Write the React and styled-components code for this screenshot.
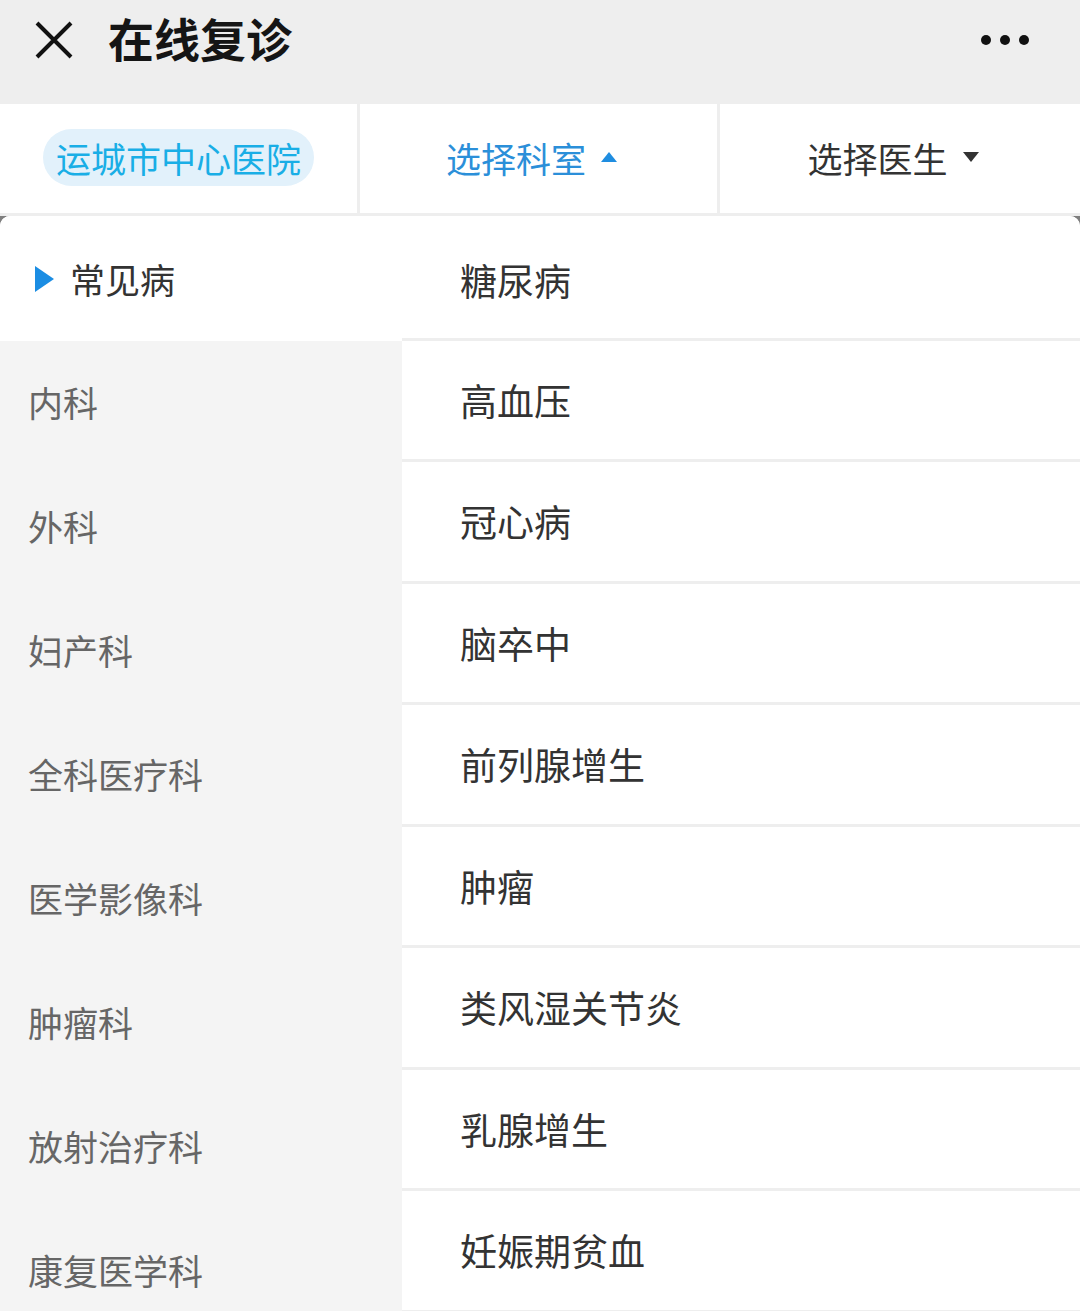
import React from "react";
import styled, { createGlobalStyle } from "styled-components";

const GlobalStyle = createGlobalStyle`
  html, body {
    margin: 0;
    padding: 0;
    background: #ffffff;
  }
  body {
    font-family: "Noto Sans CJK SC", "Noto Sans", sans-serif;
    -webkit-font-smoothing: antialiased;
  }
  * { box-sizing: border-box; }
`;

const Page = styled.div`
  width: 1080px;
  height: 1311px;
  overflow: hidden;
  display: flex;
  flex-direction: column;
  background: #7f7f7f;
`;

const TopBar = styled.header`
  height: 104px;
  flex: none;
  background: #eeeeee;
  display: flex;
  align-items: flex-start;
  padding: 0 0 0 35px;
`;

const TopRow = styled.div`
  height: 80px;
  flex: 1;
  display: flex;
  align-items: center;
`;

const CloseButton = styled.button`
  width: 38px;
  height: 38px;
  padding: 0;
  border: 0;
  background: transparent;
  display: flex;
  align-items: center;
  justify-content: center;
  margin-right: 35px;
`;

const Title = styled.h1`
  margin: 0 0 6px;
  font-size: 46px;
  font-weight: 700;
  color: #151515;
  line-height: 1;
  flex: 1;
`;

const MoreButton = styled.button`
  border: 0;
  padding: 0;
  background: transparent;
  width: 48px;
  height: 20px;
  margin-right: 51px;
  display: flex;
  align-items: center;
  justify-content: space-between;
`;

const Dot = styled.span`
  width: 10px;
  height: 10px;
  border-radius: 50%;
  background: #111111;
`;

const FilterBar = styled.nav`
  flex: none;
  height: 112px;
  display: grid;
  grid-template-columns: 357px 357px 360px;
  column-gap: 3px;
  background: #eeeeee;
  border-bottom: 3px solid #eeeeee;
`;

const FilterCell = styled.div`
  background: #ffffff;
  display: flex;
  align-items: center;
  justify-content: center;
  font-size: 35px;
  line-height: 1;
  padding-bottom: 3px;
  color: ${(p) => (p.$active ? "#2b8fd9" : "#333333")};
`;

const HospitalPill = styled.span`
  background: #e2f1fb;
  color: #19aee6;
  height: 57px;
  padding: 0 13px;
  border-radius: 29px;
  display: inline-flex;
  align-items: center;
  font-size: 35px;
`;

const Caret = styled.span`
  width: 0;
  height: 0;
  margin-left: 15px;
  margin-right: 14px;
  border-left: 8px solid transparent;
  border-right: 8px solid transparent;
  ${(p) =>
    p.$up
      ? `border-bottom: 10px solid ${p.$color};`
      : `border-top: 10px solid ${p.$color};`}
`;

const Panel = styled.section`
  flex: 1;
  display: flex;
  background: #ffffff;
  border-radius: 10px 10px 0 0;
  overflow: hidden;
`;

const CategoryList = styled.ul`
  list-style: none;
  margin: 0;
  padding: 0;
  width: 402px;
  flex: none;
  background: #f4f4f4;
`;

const CategoryItem = styled.li`
  height: ${(p) => (p.$active ? "125px" : "124px")};
  display: flex;
  align-items: center;
  padding: 0 0 ${(p) => (p.$active ? "0" : "4px")} ${(p) => (p.$active ? "35px" : "28px")};
  font-size: 35px;
  color: ${(p) => (p.$active ? "#333333" : "#666666")};
  background: ${(p) => (p.$active ? "#ffffff" : "transparent")};
`;

const Pointer = styled.span`
  width: 0;
  height: 0;
  border-top: 13px solid transparent;
  border-bottom: 13px solid transparent;
  border-left: 19px solid #1b8de3;
  margin-right: 16px;
`;

const DiseaseList = styled.ul`
  list-style: none;
  margin: 0;
  padding: 0;
  flex: 1;
  background: #ffffff;
`;

const DiseaseItem = styled.li`
  height: ${(p) => (p.$first ? "124.5px" : "121.5px")};
  display: flex;
  align-items: center;
  padding: ${(p) => (p.$first ? "6px" : "0")} 0 0 58px;
  border-bottom: 3px solid #eeeeee;
  font-size: 37px;
  color: #333333;
`;

const categories = [
  "常见病",
  "内科",
  "外科",
  "妇产科",
  "全科医疗科",
  "医学影像科",
  "肿瘤科",
  "放射治疗科",
  "康复医学科",
];

const diseases = [
  "糖尿病",
  "高血压",
  "冠心病",
  "脑卒中",
  "前列腺增生",
  "肿瘤",
  "类风湿关节炎",
  "乳腺增生",
  "妊娠期贫血",
];

function CloseIcon() {
  return (
    <svg width="38" height="38" viewBox="0 0 38 38">
      <path
        d="M2 2 L36 36 M36 2 L2 36"
        stroke="#111111"
        strokeWidth="4"
        fill="none"
      />
    </svg>
  );
}

export default function App() {
  return (
    <>
      <GlobalStyle />
      <Page>
        <TopBar>
          <TopRow>
            <CloseButton aria-label="关闭">
              <CloseIcon />
            </CloseButton>
            <Title>在线复诊</Title>
            <MoreButton aria-label="更多">
              <Dot />
              <Dot />
              <Dot />
            </MoreButton>
          </TopRow>
        </TopBar>

        <FilterBar>
          <FilterCell>
            <HospitalPill>运城市中心医院</HospitalPill>
          </FilterCell>
          <FilterCell $active>
            选择科室
            <Caret $up $color="#1f8de0" />
          </FilterCell>
          <FilterCell>
            选择医生
            <Caret $color="#333333" />
          </FilterCell>
        </FilterBar>

        <Panel>
          <CategoryList>
            {categories.map((name, i) => (
              <CategoryItem key={name} $active={i === 0}>
                {i === 0 && <Pointer />}
                {name}
              </CategoryItem>
            ))}
          </CategoryList>
          <DiseaseList>
            {diseases.map((name, i) => (
              <DiseaseItem key={name} $first={i === 0}>
                {name}
              </DiseaseItem>
            ))}
          </DiseaseList>
        </Panel>
      </Page>
    </>
  );
}
